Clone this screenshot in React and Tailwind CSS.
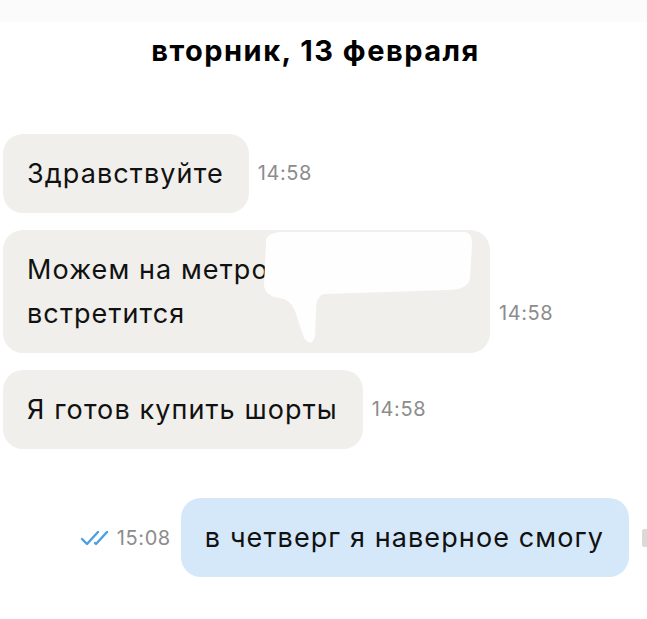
import React from "react";

const INCOMING = "bg-[#f0efeb]";

function Time({ children }) {
  return (
    <span className="text-[20px] leading-none tracking-[0.6px] text-[#8c8c8c] pb-[30px]">
      {children}
    </span>
  );
}

function DoubleCheck() {
  return (
    <svg width="30" height="16" viewBox="0 0 30 16" fill="none">
      <path
        d="M2 9 L7 14 L18 2"
        stroke="#4a9fe3"
        strokeWidth="2.4"
        strokeLinecap="round"
        strokeLinejoin="round"
      />
      <path
        d="M15 13 L16 14 L27 2"
        stroke="#4a9fe3"
        strokeWidth="2.4"
        strokeLinecap="round"
        strokeLinejoin="round"
      />
    </svg>
  );
}

function Incoming({ children, time, className = "" }) {
  return (
    <div className="flex items-end gap-[9px] pl-[3px]">
      <div
        className={`${INCOMING} rounded-[20px] pl-[24px] pr-[25px] py-[17.5px] text-[27px] leading-[44px] tracking-[1.1px] text-[#111] relative ${className}`}
      >
        {children}
      </div>
      <Time>{time}</Time>
    </div>
  );
}

export default function App() {
  return (
    <div
      className="w-[647px] h-[619px] bg-white overflow-hidden"
      style={{ fontFamily: "Inter, 'Noto Sans', sans-serif" }}
    >
      <div className="h-[22px] bg-[#fbfbfb]" />
      <h1 className="text-center text-[29px] font-bold text-black leading-none mt-[14px] tracking-[1.5px] pr-[16px]">
        вторник, 13 февраля
      </h1>
      <div className="flex flex-col gap-[17px] mt-[69px]">
        <Incoming time="14:58">Здравствуйте</Incoming>
        <Incoming time="14:58" className="w-[487px]">
          Можем на метро
          <br />
          встретится
          <svg
            className="absolute left-[255px] top-0"
            width="220"
            height="120"
            viewBox="0 0 220 120"
          >
            <path
              d="M8 14 Q6 3 24 2 L206 2 Q214 2 214 14 L212 48 Q210 60 190 60 L66 64 Q58 66 58 80 L57 106 Q54 118 46 108 L38 84 Q34 70 22 68 Q6 66 6 54 Z"
              fill="#fefefe"
            />
          </svg>
        </Incoming>
        <Incoming time="14:58">Я готов купить шорты</Incoming>
      </div>
      <div className="flex items-center justify-end mt-[49px]">
        <DoubleCheck />
        <span className="text-[20px] leading-none tracking-[0.6px] text-[#8c8c8c] ml-[7px] mr-[10px]">
          15:08
        </span>
        <div className="bg-[#d5e8fa] rounded-[20px] pl-[24px] pr-[25px] py-[17.5px] text-[27px] leading-[44px] tracking-[1.1px] text-[#111]">
          в четверг я наверное смогу
        </div>
        <div className="w-[18px] flex justify-end">
          <div className="w-[5px] h-[18px] bg-[#dcdad6] rounded-l-[2px]" />
        </div>
      </div>
    </div>
  );
}
